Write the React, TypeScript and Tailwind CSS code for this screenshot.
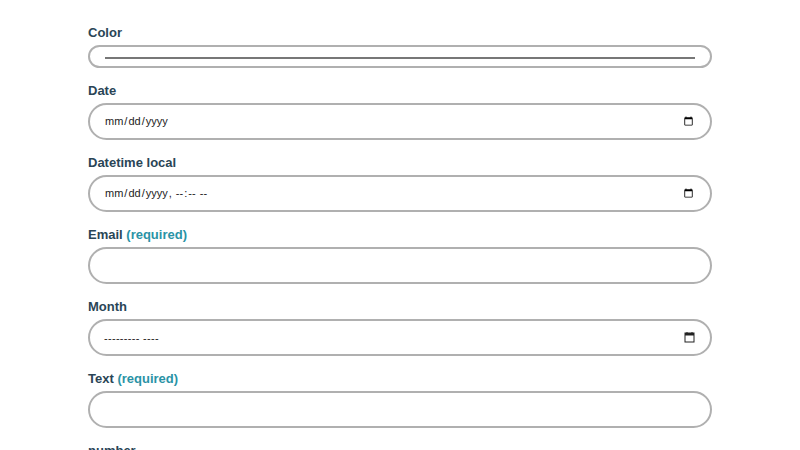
import React from "react";

const inputCls =
  "block w-full h-[37px] rounded-full border-2 border-[#b0b0b0] bg-white px-[14px] text-[11px] text-[#222] outline-none";

function Label({ text, required }: { text: string; required?: boolean }) {
  return (
    <label className="block pt-[1px] text-[13px] leading-5 font-bold text-[#2a4556] mb-[2px]">
      {text}
      {required && <span className="text-[#2a93a6]"> (required)</span>}
    </label>
  );
}

function CalendarIcon() {
  return (
    <svg width="11" height="11" viewBox="0 0 11 11" className="block">
      <rect x="1" y="1" width="9" height="9" fill="none" stroke="#222" strokeWidth="1" />
      <rect x="1" y="1" width="9" height="2.5" fill="#222" />
      <rect x="2.5" y="0" width="1" height="1.5" fill="#222" />
      <rect x="7.5" y="0" width="1" height="1.5" fill="#222" />
    </svg>
  );
}

export default function App() {
  return (
    <div
      className="min-h-[450px] bg-white pt-[22px]"
      style={{ fontFamily: '"Liberation Sans", Arial, sans-serif' }}
    >
      <form className="mx-auto w-[624px]">
        <div className="mb-[12px]">
          <Label text="Color" />
          <input
            type="color"
            defaultValue="#000000"
            className="block w-full h-[23px] rounded-full border-2 border-[#b0b0b0] bg-white px-[13px] py-[8px]"
          />
        </div>
        <div className="mb-[12px]">
          <Label text="Date" />
          <input type="date" className={inputCls} />
        </div>
        <div className="mb-[12px]">
          <Label text="Datetime local" />
          <input type="datetime-local" className={inputCls} />
        </div>
        <div className="mb-[12px]">
          <Label text="Email" required />
          <input type="email" className={inputCls} />
        </div>
        <div className="mb-[12px]">
          <Label text="Month" />
          <div className="relative">
            <input
              type="text"
              readOnly
              placeholder="--------- ----"
              className={inputCls + " placeholder:text-[#222] tracking-[0.3px]"}
            />
            <div className="absolute right-[17px] top-[13px]">
              <CalendarIcon />
            </div>
          </div>
        </div>
        <div className="mb-[12px]">
          <Label text="Text" required />
          <input type="text" className={inputCls} />
        </div>
        <div className="mb-[12px]">
          <Label text="number" />
          <input type="number" className={inputCls} />
        </div>
      </form>
    </div>
  );
}
